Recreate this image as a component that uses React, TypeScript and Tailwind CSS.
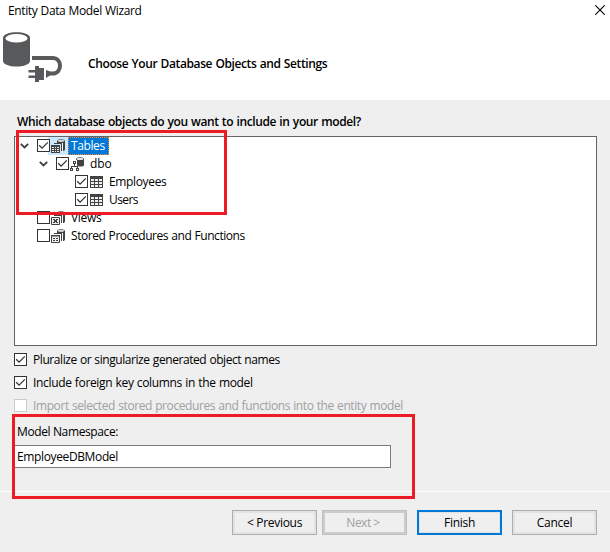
import React from "react";

function Check({ on = false, disabled = false }: { on?: boolean; disabled?: boolean }) {
  return (
    <span className={`relative block h-[13px] w-[13px] shrink-0 border bg-white ${disabled ? "border-[#cccccc]" : "border-[#333333]"}`}>
      {on && (
        <svg viewBox="0 0 11 11" className="block h-[11px] w-[11px]">
          <path d="M1.2 5.2 4.1 8.1 9.8 2.4" fill="none" stroke="#333" strokeWidth="1.3" />
        </svg>
      )}
    </span>
  );
}

function Chevron() {
  return (
    <svg viewBox="0 0 9 6" className="mt-[6px] block h-[6px] w-[9px] shrink-0">
      <path d="M0.8 0.8 4.5 4.5 8.2 0.8" fill="none" stroke="#404040" strokeWidth="1.8" />
    </svg>
  );
}

function Cylinder() {
  return (
    <>
      <path d="M6 2C6 -.2 14 -.2 14 2V10.5C14 11.3 13 12 12 12V5H6Z" fill="#424242" />
      <ellipse cx="10" cy="1.8" rx="3.3" ry="1.1" fill="#dcdcde" />
      <path d="M6 4H12V12H11V5H6Z" fill="#fff" />
      <path d="M3 4H11V12H10V5H3Z" fill="#424242" />
    </>
  );
}

function TablesIcon() {
  return (
    <svg viewBox="0 0 15 15" className="block h-[15px] w-[15px]">
      <Cylinder />
      <path d="M0 6H9V14H0Z" fill="#424242" />
      <path d="M1 8H3V9H1ZM4 8H5V9H4ZM6 8H8V9H6ZM1 10H3V11H1ZM4 10H5V11H4ZM6 10H8V11H6ZM1 12H3V13H1ZM4 12H5V13H4ZM6 12H8V13H6Z" fill="#f0eff1" />
    </svg>
  );
}

function SchemaIcon() {
  return (
    <svg viewBox="0 0 15 15" className="block h-[15px] w-[15px]">
      <path d="M6 2C6 -.2 14 -.2 14 2V8.3C14 10 7 10 7 8.3Z" fill="#424242" />
      <ellipse cx="10" cy="1.9" rx="3.3" ry="1.2" fill="#e4e4e6" />
      <path d="M2 3H7V9H2Z" fill="#fff" />
      <path d="M3 4H6V7H5V9H8V11H9V14H6V11H7V10H2V11H3V14H0V11H1V9H4V7H3Z" fill="#424242" />
      <path d="M1 12H2V13H1ZM7 12H8V13H7ZM4 5H5V6H4Z" fill="#fff" />
    </svg>
  );
}

function ViewsIcon({ procedure = false }: { procedure?: boolean }) {
  return (
    <svg viewBox="0 0 15 15" className="block h-[15px] w-[15px]">
      <Cylinder />
      <path d="M.5 6.5H8.5V13.5H.5Z" fill="#f0eff1" stroke="#424242" />
      {procedure ? (
        <path d="M2 9H4V10H2ZM5 9H7V10H5ZM2 11H4V12H2ZM5 11H7V12H5ZM0 6H9V7.6H0Z" fill="#424242" />
      ) : (
        <path d="M2 8H4V9H5V8H7V9H6V11H7V12H5V11H4V12H2V11H3V9H2Z" fill="#424242" />
      )}
    </svg>
  );
}

function TableIcon() {
  return (
    <svg viewBox="0 0 13 12" className="mt-[1px] ml-[1px] block h-[12px] w-[13px]">
      <path d="M0 0H13V12H0Z" fill="#424242" />
      <path d="M1 3H4V5H1ZM5 3H8V5H5ZM9 3H12V5H9ZM1 6H4V8H1ZM5 6H8V8H5ZM9 6H12V8H9ZM1 9H4V11H1ZM5 9H8V11H5ZM9 9H12V11H9Z" fill="#f0eff1" />
    </svg>
  );
}

function DatabasePlug() {
  return (
    <svg viewBox="0 0 62 54" className="block h-[54px] w-[62px]">
      <path d="M3 9C3 1.4 30 1.4 30 9V32C30 39.3 3 39.3 3 32Z" fill="#58595b" />
      <ellipse cx="16.5" cy="9.3" rx="11" ry="4.3" fill="#fff" />
      <path d="M32 29H52.5C62.5 29 62.5 44.5 52.5 44.5H49" fill="none" stroke="#58595b" strokeWidth="4" />
      <path d="M35 37H39V39H44V51H39V53H35V49H28.5V46.5H35V43.5H28.5V41H35ZM46 41 50 42.5V46.5L46 49Z" fill="#58595b" />
    </svg>
  );
}

type RowProps = {
  indent: string;
  label: string;
  tracking: string;
  icon: React.ReactNode;
  checked?: boolean;
  expanded?: boolean;
  selected?: boolean;
};

function TreeRow({ indent, label, tracking, icon, checked, expanded, selected }: RowProps) {
  return (
    <div className={`flex h-[18px] ${indent}`}>
      <span className="flex w-[17px] shrink-0">{expanded && <Chevron />}</span>
      <span className="z-1 pt-[2px]">
        <Check on={checked} />
      </span>
      <span className={`-ml-[2px] flex h-[18px] w-[20px] shrink-0 pt-[2px] pl-[3px] ${selected ? "bg-[#cce8ff]" : ""}`}>{icon}</span>
      <span className={`h-[18px] ${tracking} ${selected ? "border border-dotted border-[#ff8728] bg-[#0078d7] pr-[3px] pl-[2px] leading-[15px] text-white" : "pl-[3px] leading-[17px]"}`}>
        {label}
      </span>
    </div>
  );
}

function Option({ label, tracking, on, disabled }: { label: string; tracking: string; on?: boolean; disabled?: boolean }) {
  return (
    <label className={`flex h-[23px] items-center gap-[6px] ${disabled ? "text-[#a0a0a0]" : ""}`}>
      <Check on={on} disabled={disabled} />
      <span className={tracking}>{label}</span>
    </label>
  );
}

const plain = "border border-[#adadad] bg-[#efefef] shadow-[inset_0_0_0_2px_#e3e3e3]";

export default function App() {
  return (
    <div className="relative flex h-[552px] w-[610px] flex-col overflow-hidden bg-[#efefef] font-['Open_Sans','Noto_Sans',sans-serif] text-[12px] leading-[18px] whitespace-nowrap text-black">
      <header className="h-[100px] bg-white">
        <div className="flex h-[22px] items-center justify-between pr-[5px] pl-[8px]">
          <span className="tracking-[-0.38px] [word-spacing:0.5px]">Entity Data Model Wizard</span>
          <svg viewBox="0 0 10 10" className="mt-[-2px] h-[10px] w-[10px]">
            <path d="M.3.3 9.7 9.7M9.7.3.3 9.7" stroke="#000" strokeWidth="1.1" />
          </svg>
        </div>
        <div className="flex pt-[7px]">
          <DatabasePlug />
          <h1 className="mt-[26px] ml-[26px] font-semibold tracking-[-0.38px] [word-spacing:0.5px]">Choose Your Database Objects and Settings</h1>
        </div>
      </header>

      <main className="flex h-[391px] flex-col pr-[13px] pl-[14px]">
        <h2 className="mt-[13px] pl-[3px] font-semibold tracking-[-0.37px] [word-spacing:0.5px]">Which database objects do you want to include in your model?</h2>
        <div className="mt-[5px] h-[210px] shrink-0 border border-[#646464] bg-white">
          <TreeRow indent="pl-[5px]" label="Tables" tracking="tracking-[-0.4px]" icon={<TablesIcon />} checked expanded selected />
          <TreeRow indent="pl-[24px]" label="dbo" tracking="tracking-[-0.1px]" icon={<SchemaIcon />} checked expanded />
          <TreeRow indent="pl-[43px]" label="Employees" tracking="tracking-[-0.35px]" icon={<TableIcon />} checked />
          <TreeRow indent="pl-[43px]" label="Users" tracking="tracking-[-0.6px]" icon={<TableIcon />} checked />
          <TreeRow indent="pl-[5px]" label="Views" tracking="tracking-[-0.3px]" icon={<ViewsIcon />} />
          <TreeRow indent="pl-[5px]" label="Stored Procedures and Functions" tracking="tracking-[-0.44px] [word-spacing:0.5px]" icon={<ViewsIcon procedure />} />
        </div>
        <div className="mt-[2px]">
          <Option label="Pluralize or singularize generated object names" tracking="tracking-[-0.43px] [word-spacing:0.5px]" on />
          <Option label="Include foreign key columns in the model" tracking="tracking-[-0.34px] [word-spacing:0.5px]" on />
          <Option label="Import selected stored procedures and functions into the entity model" tracking="tracking-[-0.41px] [word-spacing:0.5px]" disabled />
        </div>
        <label className="mt-[6px] pl-[3px] tracking-[-0.38px]">Model Namespace:</label>
        <div className="mt-[4px] flex h-[23px] w-[377px] items-center border border-[#7a7a7a] bg-white pl-[2px] tracking-[-0.37px]">EmployeeDBModel</div>
      </main>

      <footer className="flex justify-end border-t border-white pt-[18px] pr-[13px] leading-[23px] tracking-[-0.3px] [word-spacing:1px]">
        <button className={`mr-[5px] h-[25px] w-[85px] ${plain}`}>&lt; Previous</button>
        <button className="mr-[10px] h-[25px] w-[85px] border border-[#bfbfbf] bg-[#efefef] pr-[3px] tracking-[-0.5px] text-[#a0a0a0] shadow-[inset_0_0_0_2px_#cccccc]">Next &gt;</button>
        <button className="mr-[10px] h-[25px] w-[85px] border-2 border-[#0078d7] bg-[#efefef] leading-[21px] shadow-[inset_0_0_0_1px_#e3e3e3]">Finish</button>
        <button className={`h-[25px] w-[85px] ${plain}`}>Cancel</button>
      </footer>

      <div className="pointer-events-none absolute top-[130px] left-[16px] z-2 h-[85px] w-[211px] border-3 border-[#ed1c24]" />
      <div className="pointer-events-none absolute top-[414px] left-[12px] z-2 h-[85px] w-[403px] border-3 border-[#ed1c24]" />
    </div>
  );
}
